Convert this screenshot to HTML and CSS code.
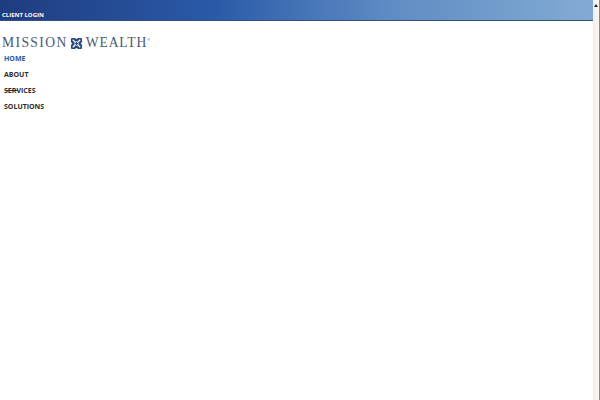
FILE: index.html
```html
<!DOCTYPE html>
<html lang="en">
<head>
<meta charset="utf-8">
<title>Mission Wealth</title>
<link rel="stylesheet" href="styles.css">
</head>
<body>
<div class="page">
  <main class="content">
    <header class="topbar"><a class="login" href="#">CLIENT LOGIN</a></header>
    <a class="logo" href="#">
      <span class="word">MISSION</span>
      <svg class="mark" viewBox="0 0 14 14" width="13" height="13" aria-hidden="true">
        <path d="M1 2.200Q1 1 2.200 1H5.500L7 2.500 8.500 1H11.800Q13 1 13 2.200V5.500L11.500 7 13 8.500V11.800Q13 13 11.800 13H8.500L7 11.500 5.500 13H2.200Q1 13 1 11.800V8.500L2.500 7 1 5.500Z" fill="#27487f"/>
        <path d="M3 3 11 11M11 3 3 11" stroke="#fff" stroke-width="1.300"/>
        <path d="M7 4.800 9.200 7 7 9.200 4.800 7Z" fill="#27487f" stroke="#fff" stroke-width="0.800"/>
      </svg>
      <span class="word wealth">WEALTH</span><sup class="reg">®</sup>
    </a>
    <nav class="menu">
      <a class="item active" href="#">HOME</a>
      <a class="item" href="#">ABOUT</a>
      <a class="item services" href="#">SERVICES<span class="strike"></span></a>
      <a class="item" href="#">SOLUTIONS</a>
    </nav>
  </main>
  <div class="scrollbar">
    <span class="arrow"></span>
  </div>
</div>
</body>
</html>
```
FILE: styles.css
```css
* { box-sizing: border-box; }
html, body { margin: 0; height: 100%; background: #fff; overflow: hidden; }
.page { display: flex; width: 600px; height: 400px; }
.content { flex: 1; min-width: 0; }
.topbar {
  height: 21px;
  padding: 11px 0 0 2px;
  background: linear-gradient(90deg, #1f3c7f 0%, #2a5aa8 36%, #5f8cc4 66%, #82abd3 100%);
  border-bottom: 1px solid #34527f;
}
.login {
  display: block;
  font: 700 6px/8px "Open Sans", sans-serif;
  color: #fff;
  text-decoration: none;
}
.logo {
  display: flex;
  align-items: center;
  margin: 15px 0 0 2px;
  height: 14px;
  color: #4a5872;
  text-decoration: none;
}
.word { font: 400 13.600px/14px "Liberation Serif", serif; letter-spacing: 1.400px; }
.wealth { letter-spacing: 0.900px; }
.mark { margin: 0 3px 0 2px; flex: none; }
.reg { font: 400 4px/4px "Liberation Sans", sans-serif; align-self: flex-start; margin: 2px 0 0 0; }
.menu { display: flex; flex-direction: column; margin-top: 1px; padding-left: 4px; }
.item {
  height: 16px;
  font: 700 7px/16px "Open Sans", sans-serif;
  color: #2b2b2b;
  text-decoration: none;
}
.active { color: #2a5a9e; }
.services { position: relative; align-self: flex-start; }
.strike {
  position: absolute;
  left: 1px;
  top: 7px;
  width: 13px;
  height: 1px;
  background: #333;
}
.scrollbar {
  flex: none;
  width: 7px;
  background: linear-gradient(90deg, #f4eee9, #faf7f4);
  border-right: 1px solid #8a8a8a;
  display: flex;
  justify-content: center;
  padding-top: 4px;
}
.arrow {
  width: 0;
  height: 0;
  border: 2px solid transparent;
  border-top: 0;
  border-bottom: 3px solid #222;
}
```
